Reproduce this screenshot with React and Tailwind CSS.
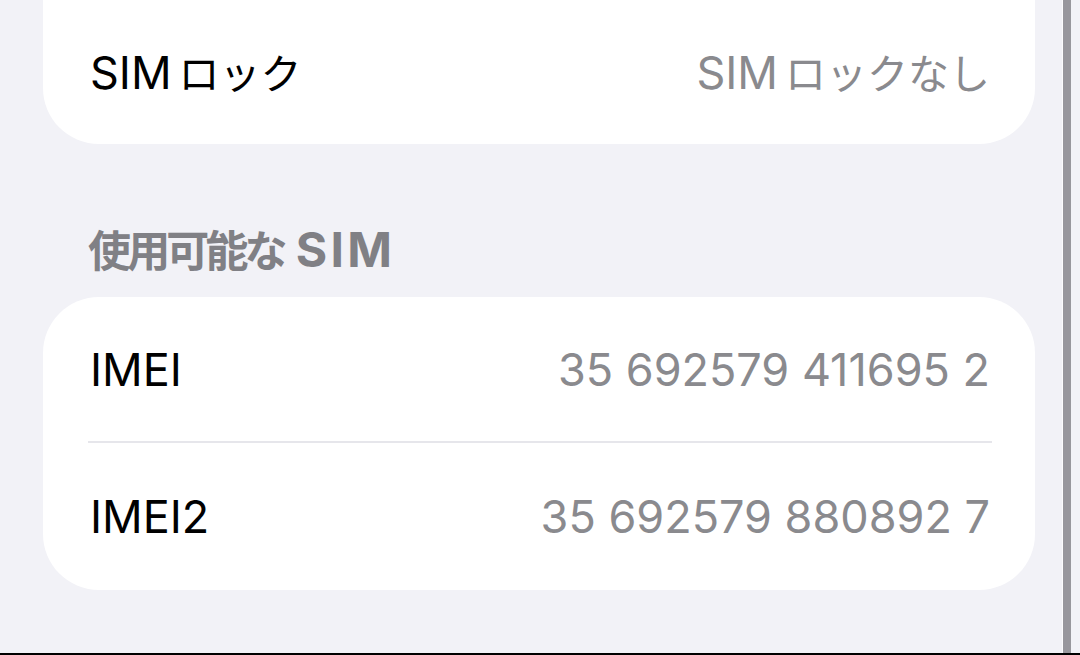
const FONT = 'font-["Inter","Noto_Sans_CJK_JP",sans-serif]'

// kana/kanji sit a bit smaller than the Latin letters, with a gap after Latin runs
function Jp({ children, className = 'ml-[7px] text-[41px]' }) {
  return <span className={className}>{children}</span>
}

function Row({ label, value, className = '' }) {
  return (
    <div className={`flex items-center justify-between pl-[47px] pr-[45px] ${className}`}>
      <span className="text-[45px] leading-none text-black">{label}</span>
      <span className="text-[45px] leading-none text-[#8a8a8e]">{value}</span>
    </div>
  )
}

export default function App() {
  return (
    <div className={`w-[1080px] h-[655px] bg-[#f2f2f7] flex flex-col overflow-hidden antialiased ${FONT}`}>
      <div className="flex flex-1 min-h-0">
        <div className="w-[1062px] pl-[43px]">
          {/* carrier lock card (top cut off) */}
          <div className="w-[992px] bg-white rounded-b-[56px]">
            <Row
              label={<>SIM<Jp>ロック</Jp></>}
              value={<>SIM<Jp>ロックなし</Jp></>}
              className="h-[144px]"
            />
          </div>

          <div className="h-[153px] flex items-end pl-[45px] pb-[18px]">
            <h2 className="text-[48px] leading-[56px] font-bold text-[#808085]">
              <Jp className="text-[43px] tracking-[-0.09em]">使用可能な</Jp>
              <span className="ml-[12px] tracking-[0.07em]">SIM</span>
            </h2>
          </div>

          <div className="w-[992px] bg-white rounded-[56px]">
            <Row label="IMEI" value="35 692579 411695 2" className="h-[144px]" />
            <div className="ml-[45px] mr-[43px] h-[2px] bg-[#e6e6eb]" />
            <Row label="IMEI2" value="35 692579 880892 7" className="h-[147px]" />
          </div>
        </div>

        {/* scroll edge */}
        <div className="w-px bg-white/80" />
        <div className="w-[8px] bg-[#98979d]" />
      </div>
      <div className="h-[2px] bg-black" />
    </div>
  )
}
